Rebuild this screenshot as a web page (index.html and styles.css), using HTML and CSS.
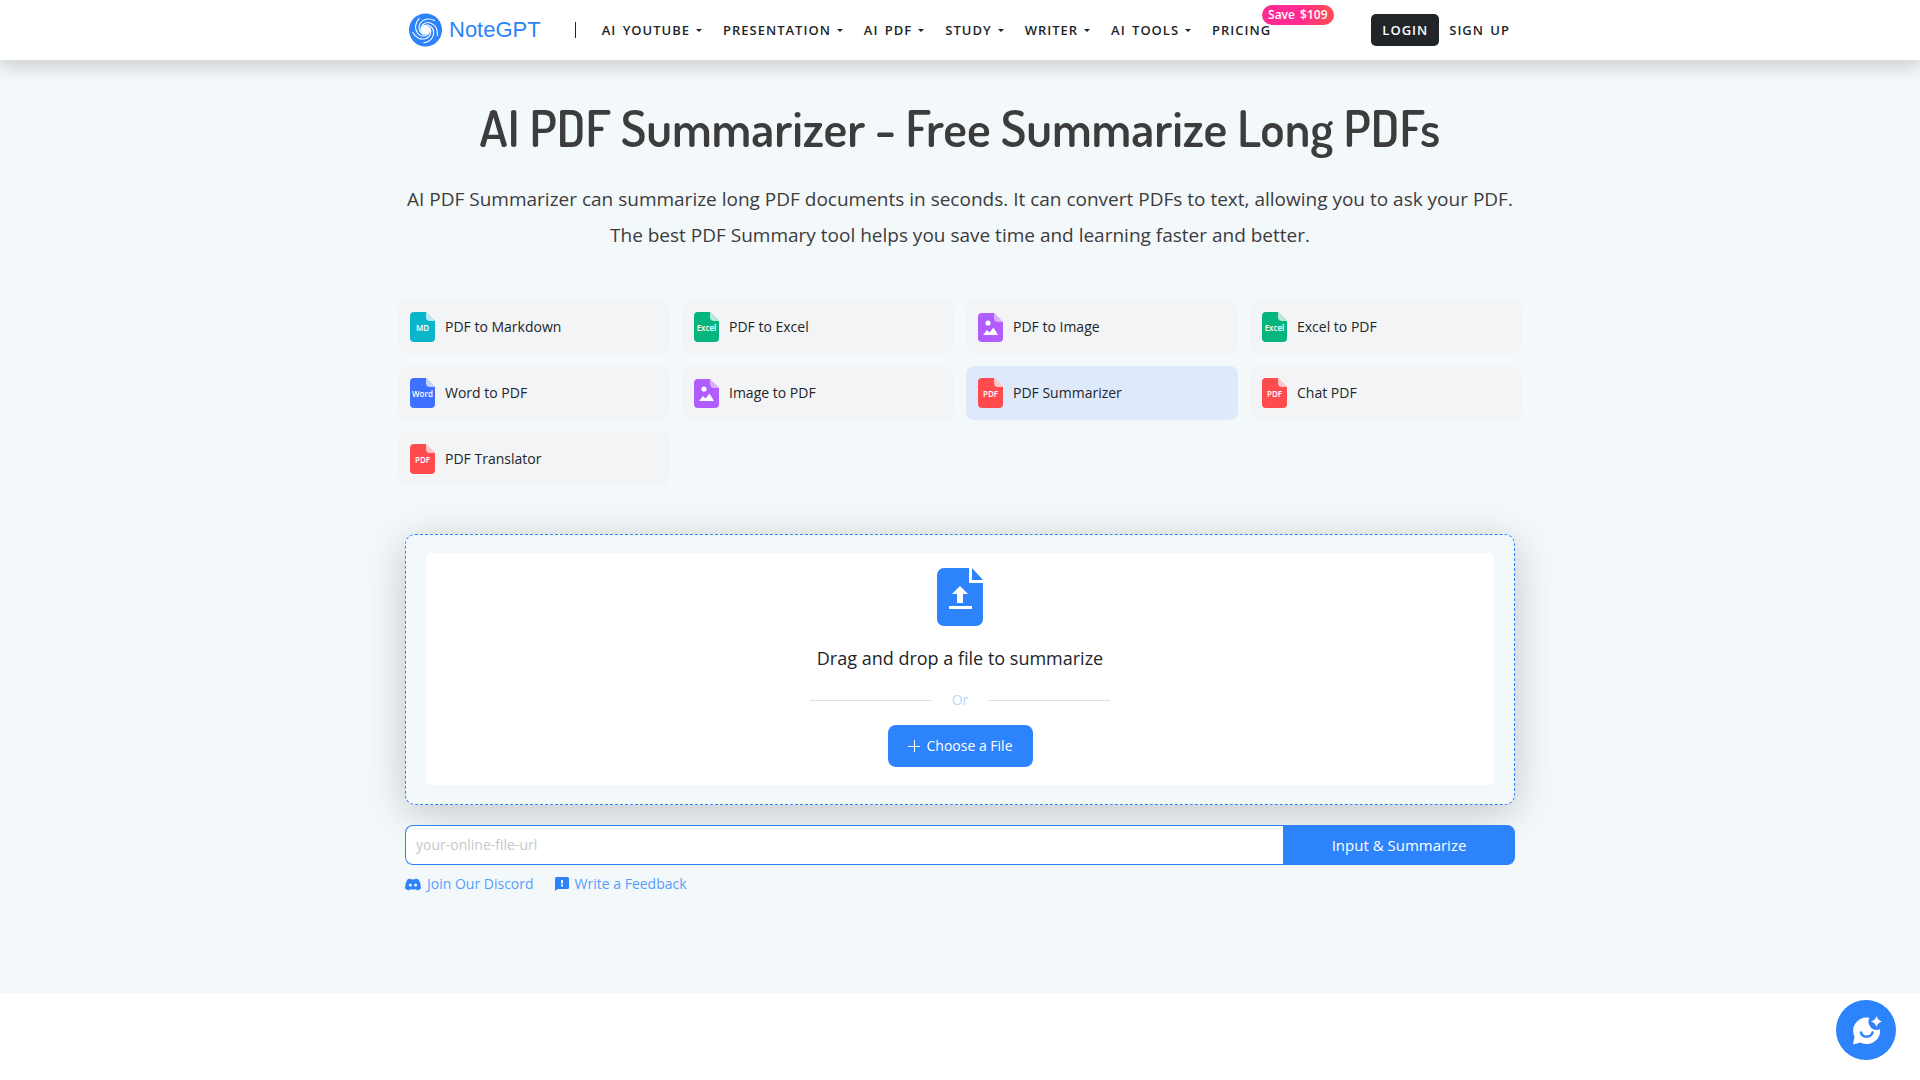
FILE: index.html
```
<!DOCTYPE html>
<html lang="en">
<head>
    <meta charset="UTF-8" />
    <meta name="viewport" content="width=device-width, initial-scale=1.0"/>
    <title>AI PDF Summarizer - NoteGPT</title>
    <link rel="stylesheet" href="styles.css">
</head>
<body>
    <!-- Shared icon shapes -->
    <svg class="sprite" aria-hidden="true">
        <symbol id="file" viewBox="0 0 25 30">
            <path fill="currentColor" d="M4 0h12l9 9v17a4 4 0 0 1-4 4H4a4 4 0 0 1-4-4V4a4 4 0 0 1 4-4z"/>
            <path fill="#fff" fill-opacity=".7" d="M16 0l9 9h-5a4 4 0 0 1-4-4z"/>
        </symbol>
        <symbol id="picture" viewBox="0 0 25 30">
            <path fill="currentColor" d="M4 1h12l9 9v16a4 4 0 0 1-4 4H4a4 4 0 0 1-4-4V5a4 4 0 0 1 4-4z"/>
            <path fill="#fff" fill-opacity=".5" d="M16 1l9 9h-5a4 4 0 0 1-4-4z"/>
            <circle cx="10" cy="11" r="2.6" fill="#fff"/>
            <path fill="#fff" d="M5 23l4-5 2.500 2.500 4-5L20 23z"/>
        </symbol>
    </svg>

    <header class="header">
        <div class="header-inner">
            <a class="logo" href="#">
                <svg class="logo-mark" viewBox="0 0 36 36" aria-hidden="true">
                    <circle cx="18" cy="18" r="17.500" fill="#2d83fb"/>
                    <circle cx="18" cy="18" r="5" fill="#fff"/>
                    <g fill="none" stroke="#fff" stroke-width="1.1" stroke-linecap="round">
                        <path id="arm" d="M13 18C13 12.500 18 9 23 10.500C28 12 31.500 17 30.500 24"/>
                        <use href="#arm" transform="rotate(72 18 18)"/>
                        <use href="#arm" transform="rotate(144 18 18)"/>
                        <use href="#arm" transform="rotate(216 18 18)"/>
                        <use href="#arm" transform="rotate(288 18 18)"/>
                    </g>
                </svg>
                <span>NoteGPT</span>
            </a>
            <span class="divider"></span>
            <nav class="nav">
                <a class="has-menu" href="#">AI YOUTUBE</a>
                <a class="has-menu" href="#">PRESENTATION</a>
                <a class="has-menu" href="#">AI PDF</a>
                <a class="has-menu" href="#">STUDY</a>
                <a class="has-menu" href="#">WRITER</a>
                <a class="has-menu" href="#">AI TOOLS</a>
                <a class="pricing" href="#">PRICING<span class="badge">Save $109</span></a>
            </nav>
            <div class="account">
                <button class="login" type="button">LOGIN</button>
                <a href="#">SIGN UP</a>
            </div>
        </div>
    </header>

    <main class="hero">
        <div class="container">
            <h1 class="title">AI PDF Summarizer - Free Summarize Long PDFs</h1>
            <p class="subtitle">AI PDF Summarizer can summarize long PDF documents in seconds. It can convert PDFs to text, allowing you to ask your PDF. The best PDF Summary tool helps you save time and learning faster and better.</p>

            <div class="tools">
                <a class="tool" href="#"><svg class="tool-icon cyan"><use href="#file"/><text x="50%" y="19">MD</text></svg>PDF to Markdown</a>
                <a class="tool" href="#"><svg class="tool-icon green"><use href="#file"/><text x="50%" y="19">Excel</text></svg>PDF to Excel</a>
                <a class="tool" href="#"><svg class="tool-icon purple"><use href="#picture"/></svg>PDF to Image</a>
                <a class="tool" href="#"><svg class="tool-icon green"><use href="#file"/><text x="50%" y="19">Excel</text></svg>Excel to PDF</a>
                <a class="tool" href="#"><svg class="tool-icon blue"><use href="#file"/><text x="50%" y="19">Word</text></svg>Word to PDF</a>
                <a class="tool" href="#"><svg class="tool-icon purple"><use href="#picture"/></svg>Image to PDF</a>
                <a class="tool active" href="#"><svg class="tool-icon red"><use href="#file"/><text x="50%" y="19">PDF</text></svg>PDF Summarizer</a>
                <a class="tool" href="#"><svg class="tool-icon red"><use href="#file"/><text x="50%" y="19">PDF</text></svg>Chat PDF</a>
                <a class="tool" href="#"><svg class="tool-icon red"><use href="#file"/><text x="50%" y="19">PDF</text></svg>PDF Translator</a>
            </div>

            <div class="upload">
                <div class="dropzone">
                    <svg class="upload-icon" viewBox="0 0 46 58" aria-hidden="true">
                        <path fill="#2d83fb" d="M7 0h25v15h14v36a7 7 0 0 1-7 7H7a7 7 0 0 1-7-7V7a7 7 0 0 1 7-7zM35 0l11 12H35z"/>
                        <path fill="#fff" d="M23 18l8 8h-5v9h-6v-9h-5zM12 38h23v3H12z"/>
                    </svg>
                    <p class="drop-text">Drag and drop a file to summarize</p>
                    <div class="or">Or</div>
                    <button class="choose" type="button">
                        <svg width="12" height="12" viewBox="0 0 12 12" aria-hidden="true"><path stroke="#fff" d="M0 6.500h12M6.500 0v12"/></svg>
                        Choose a File
                    </button>
                </div>
            </div>

            <form class="url-form">
                <input class="url-input" type="text" placeholder="your-online-file-url" aria-label="Online file URL">
                <button class="url-submit" type="button">Input &amp; Summarize</button>
            </form>

            <div class="links">
                <a href="#">
                    <svg width="16" height="13" viewBox="0 0 16 13" aria-hidden="true">
                        <path fill="#2d83fb" d="M5.300.5L6 1.500q2-.4 4 0L10.700.5Q12.500.7 13.800 1.700Q16 5.500 16 10.500Q14.400 12.100 12 12.500L11.200 11.200Q8 12 4.800 11.200L4 12.500Q1.600 12.100 0 10.500Q0 5.500 2.200 1.700Q3.500.7 5.300.5z"/>
                        <circle cx="5.400" cy="7" r="1.500" fill="#f3f8fc"/>
                        <circle cx="10.600" cy="7" r="1.500" fill="#f3f8fc"/>
                    </svg>
                    Join Our Discord
                </a>
                <a href="#">
                    <svg width="14" height="14" viewBox="0 0 14 14" aria-hidden="true">
                        <path fill="#2d83fb" d="M1.500 0h11A1.500 1.500 0 0 1 14 1.500v9a1.500 1.500 0 0 1-1.500 1.500H2.500L0 14V1.500A1.500 1.500 0 0 1 1.500 0z"/>
                        <path fill="#f3f8fc" d="M6 3h2v3.500H6zM6 7.500h2v2H6z"/>
                    </svg>
                    Write a Feedback
                </a>
            </div>
        </div>
    </main>

    <button class="chat" type="button" aria-label="Open chat">
        <svg width="32" height="30" viewBox="0 0 32 30" aria-hidden="true">
            <path fill="#fff" d="M17 2.500q1.500 0 2.500.3Q17.500 6 19 9.500T23.500 14.500Q27 15.500 30 14.300A13.200 13.200 0 0 1 16.500 29Q13 29 10.500 27.500L3 29.500 4.500 21.500A13.200 13.200 0 0 1 17 2.500z"/>
            <path fill="none" stroke="#2d83fb" stroke-width="2.500" stroke-linecap="round" d="M11 17.500c1 5.500 10 5.500 11.500 0"/>
            <path fill="#fff" d="M26.500 1q1.200 4.300 5.500 5.500Q27.700 7.700 26.500 12 25.300 7.700 21 6.500 25.300 5.300 26.500 1z"/>
        </svg>
    </button>
</body>
</html>
```
FILE: styles.css
```
* {
    margin: 0;
    padding: 0;
    box-sizing: border-box;
}

body {
    font-family: 'Open Sans', sans-serif;
    font-size: 14px;
    line-height: 20px;
    background: #fff;
    color: #212529;
}

a {
    color: inherit;
    text-decoration: none;
}

button,
input {
    font: inherit;
    border: none;
}

button {
    color: #fff;
    cursor: pointer;
}

.sprite {
    display: none;
}

/* Header */
.header {
    position: relative;
    z-index: 1;
    background: #fff;
    box-shadow: 0 8px 16px rgba(0, 0, 0, 0.15);
}

.header-inner {
    display: flex;
    align-items: center;
    max-width: 1104px;
    height: 60px;
    margin: 0 auto;
    padding-right: 2px;
}

.logo {
    display: flex;
    align-items: center;
    gap: 6px;
    font-family: 'Liberation Sans', sans-serif;
    font-size: 22px;
    color: #2d83fb;
}

.logo-mark {
    width: 35px;
    height: 34px;
}

.divider {
    width: 1px;
    height: 16px;
    margin: 0 26px 0 34px;
    background: #212529;
}

.nav,
.account {
    display: flex;
    align-items: center;
    font-size: 13px;
    font-weight: 600;
    letter-spacing: 1px;
    word-spacing: 2px;
    white-space: nowrap;
}

.nav {
    gap: 21px;
}

.has-menu::after {
    content: "";
    display: inline-block;
    margin-left: 6px;
    vertical-align: 3px;
    border-top: 3px solid;
    border-left: 3px solid transparent;
    border-right: 3px solid transparent;
}

.pricing {
    position: relative;
}

.badge {
    position: absolute;
    left: 50px;
    bottom: 15px;
    padding: 0 6px;
    border-radius: 10px;
    background: linear-gradient(90deg, #ff2a92 50%, #ff4e4e);
    color: #fff;
    font-size: 12px;
    letter-spacing: 0;
}

.account {
    gap: 10px;
    margin-left: auto;
}

.login {
    height: 32px;
    padding: 0 11px;
    border-radius: 5px;
    background: #212529;
    letter-spacing: 1px;
}

/* Hero */
.hero {
    padding: 36px 16px 99px;
    background: #f3f8fb;
}

.container {
    max-width: 1124px;
    margin: 0 auto;
}

.title {
    color: #3c3c3c;
    font-family: Dosis, 'Lato', sans-serif;
    font-size: 50px;
    font-weight: 600;
    line-height: 64px;
    text-align: center;
}

.subtitle {
    margin: 21px 0 47px;
    color: #3c3c3c;
    font-size: 19px;
    line-height: 36px;
    text-align: center;
}

.tools {
    display: grid;
    grid-template-columns: repeat(4, 1fr);
    gap: 12px;
}

.tool {
    display: flex;
    align-items: center;
    gap: 10px;
    height: 54px;
    padding: 0 12px;
    border-radius: 8px;
    background: #f3f4f6;
}

.tool.active {
    background: #dfe9fc;
}

.tool-icon {
    width: 25px;
    height: 30px;
}

.tool-icon text {
    fill: #fff;
    font-size: 8px;
    font-weight: 600;
    text-anchor: middle;
}

.cyan {
    color: #0bb6cb;
}

.green {
    color: #06b47d;
}

.purple {
    color: #b05cff;
}

.blue {
    color: #3f70ff;
}

.red {
    color: #ff4b4e;
}

/* Upload box */
.upload {
    margin: 48px 7px 20px;
    padding: 18px 20px 19px;
    border: 1px dashed #2d83fb;
    border-radius: 10px;
    background: #f3f8fb;
    box-shadow: 0 8px 40px rgba(0, 0, 0, 0.2);
}

.dropzone {
    display: flex;
    flex-direction: column;
    align-items: center;
    padding: 15px 16px 18px;
    border-radius: 6px;
    background: #fff;
}

.upload-icon {
    width: 46px;
    height: 58px;
}

.drop-text {
    margin: 20px 0;
    font-size: 18px;
    line-height: 24px;
}

.or {
    display: flex;
    align-items: center;
    gap: 20px;
    width: 300px;
    color: #b9d6fb;
}

.or::before,
.or::after {
    content: "";
    flex: 1;
    height: 1px;
    background: #dcdfe6;
}

.choose {
    display: flex;
    align-items: center;
    gap: 7px;
    height: 42px;
    margin-top: 15px;
    padding: 0 20px;
    border-radius: 8px;
    background: #2d83fb;
}

.url-form {
    position: relative;
    display: flex;
    height: 40px;
    margin: 0 7px;
}

.url-input {
    flex: 1;
    padding: 0 10px;
    border: 1px solid #2d83fb;
    border-right: none;
    border-radius: 8px 0 0 8px;
    background: #fff;
}

.url-input::placeholder {
    color: #c4c8cc;
}

.url-submit {
    width: 232px;
    border-radius: 0 8px 8px 0;
    background: #2d83fb;
    font-size: 15px;
}

.links {
    display: flex;
    gap: 21px;
    margin: 9px 7px 0;
    color: #579dfc;
}

.links a {
    display: flex;
    align-items: center;
    gap: 6px;
}

.chat {
    position: fixed;
    right: 24px;
    bottom: 20px;
    display: flex;
    align-items: center;
    justify-content: center;
    width: 60px;
    height: 60px;
    border-radius: 50%;
    background: #2d83fb;
}
```
